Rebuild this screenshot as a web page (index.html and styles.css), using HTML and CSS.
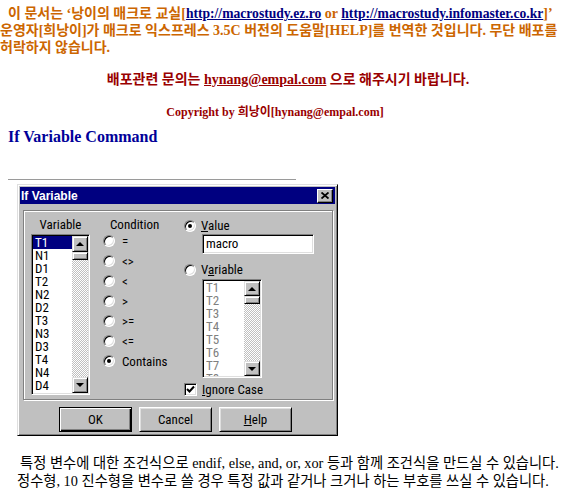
FILE: index.html
```html
<!DOCTYPE html>
<html lang="ko">
<head>
<meta charset="utf-8">
<title>If Variable Command</title>
<link rel="stylesheet" href="styles.css">
</head>
<body>
<div class="intro">
  <div class="line first">이 문서는 ‘낭이의 매크로 교실[<a href="#">http://macrostudy.ez.ro</a> or <a href="#">http://macrostudy.infomaster.co.kr</a>]’</div>
  <div class="line">운영자[희낭이]가 매크로 익스프레스 3.5C 버전의 도움말[HELP]를 번역한 것입니다. 무단 배포를</div>
  <div class="line">허락하지 않습니다.</div>
</div>
<p class="contact">배포관련 문의는 <a href="#">hynang@empal.com</a> 으로 해주시기 바랍니다.</p>
<p class="copyright">Copyright by 희낭이[hynang@empal.com]</p>
<h2 class="heading">If Variable Command</h2>
<hr class="rule">

<div class="dialog">
  <div class="titlebar">
    <span class="title">If Variable</span>
    <span class="close"><svg width="8" height="7" viewBox="0 0 8 7"><path d="M0.5 0.5 L7.5 6.5 M7.5 0.5 L0.5 6.5" stroke="#000" stroke-width="1.8" fill="none"/></svg></span>
  </div>
  <div class="group">
    <div class="col col-var">
      <div class="label center">Variable</div>
      <div class="listbox var-list">
        <ul class="items">
          <li class="sel">T1</li><li>N1</li><li>D1</li><li>T2</li><li>N2</li><li>D2</li><li>T3</li><li>N3</li><li>D3</li><li>T4</li><li>N4</li><li>D4</li>
        </ul>
        <div class="vscroll">
          <div class="sbtn"><i class="tri-up"></i></div>
          <div class="thumb"></div>
          <div class="track"></div>
          <div class="sbtn"><i class="tri-down"></i></div>
        </div>
      </div>
    </div>
    <div class="col col-cond">
      <div class="label cond-label">Condition</div>
      <div class="radio-row"><span class="radio"></span><span>=</span></div>
      <div class="radio-row"><span class="radio"></span><span>&lt;&gt;</span></div>
      <div class="radio-row"><span class="radio"></span><span>&lt;</span></div>
      <div class="radio-row"><span class="radio"></span><span>&gt;</span></div>
      <div class="radio-row"><span class="radio"></span><span>&gt;=</span></div>
      <div class="radio-row"><span class="radio"></span><span>&lt;=</span></div>
      <div class="radio-row"><span class="radio checked"></span><span>Contains</span></div>
    </div>
    <div class="col col-right">
      <div class="opt-row value-row"><span class="radio checked"></span><span><u>V</u>alue</span></div>
      <div class="textbox">macro</div>
      <div class="opt-row var-row"><span class="radio"></span><span>V<u>a</u>riable</span></div>
      <div class="listbox dis-list">
        <ul class="items disabled">
          <li>T1</li><li>T2</li><li>T3</li><li>T4</li><li>T5</li><li>T6</li><li>T7</li><li>T8</li>
        </ul>
        <div class="vscroll">
          <div class="sbtn"><i class="tri-up"></i></div>
          <div class="thumb"></div>
          <div class="track"></div>
          <div class="sbtn"><i class="tri-down"></i></div>
        </div>
      </div>
      <div class="opt-row check-row"><span class="checkbox"><svg width="9" height="9" viewBox="0 0 9 9"><path d="M1 4 L3.5 6.5 L8 1.5" stroke="#000" stroke-width="2" fill="none"/></svg></span><span><u>I</u>gnore Case</span></div>
    </div>
  </div>
  <div class="buttons">
    <div class="btn default">OK</div>
    <div class="btn">Cancel</div>
    <div class="btn"><u>H</u>elp</div>
  </div>
</div>

<div class="outro">
  <div class="oline first">특정 변수에 대한 조건식으로 endif, else, and, or, xor 등과 함께 조건식을 만드실 수 있습니다.</div>
  <div class="oline">정수형, 10 진수형을 변수로 쓸 경우 특정 값과 같거나 크거나 하는 부호를 쓰실 수 있습니다.</div>
</div>
</body>
</html>
```

FILE: styles.css
```css
* { box-sizing: border-box; }
html, body { margin: 0; padding: 0; background: #fff; }
body {
  width: 568px;
  font-family: "Liberation Serif", "Noto Sans CJK KR", serif;
  color: #000;
}

/* ---------- header text ---------- */
.intro {
  padding-top: 5px;
  font-size: 14px;
  font-weight: bold;
  line-height: 17px;
  color: #cc6600;
  white-space: nowrap;
}
.intro .first { padding-left: 8px; }
.intro a { color: #000080; text-decoration: underline; font-size: 13.6px; }

.contact {
  margin: 16px 0 0;
  text-align: center;
  font-size: 14px;
  line-height: 16px;
  font-weight: bold;
  color: #990000;
  padding-left: 8px;
}
.contact a { color: #990000; text-decoration: underline; }

.copyright {
  margin: 16px 0 0;
  text-align: center;
  font-size: 12px;
  line-height: 16px;
  font-weight: bold;
  color: #990000;
  padding-right: 18px;
}

.heading {
  margin: 8px 0 0 8px;
  font-size: 16px;
  line-height: 18px;
  font-weight: bold;
  color: #000099;
}

.rule {
  margin: 33px 0 0 8px;
  width: 288px;
  height: 0;
  border: 0;
  border-top: 1px solid #9a9a9a;
}

/* ---------- dialog ---------- */
.dialog {
  margin: 4px 0 0 17px;
  width: 321px;
  height: 252px;
  background: #c0c0c0;
  border: 1px solid;
  border-color: #dfdfdf #000 #000 #dfdfdf;
  box-shadow: inset 1px 1px 0 #fff, inset -1px -1px 0 #808080;
  padding: 2px;
  font-family: "Roboto", "Liberation Sans", sans-serif;
  font-stretch: 75%;
  font-weight: 400;
  font-size: 13px;
  color: #000;
}
.titlebar {
  height: 17px;
  background: #000080;
  display: flex;
  align-items: center;
  justify-content: space-between;
  padding: 0 2px 0 1px;
}
.title {
  font-family: "Liberation Sans", sans-serif;
  font-stretch: normal;
  font-weight: bold;
  font-size: 12px;
  color: #fff;
}
.close {
  width: 16px;
  height: 14px;
  background: #c0c0c0;
  border: 1px solid;
  border-color: #fff #000 #000 #fff;
  box-shadow: inset -1px -1px 0 #808080;
  display: flex;
  align-items: center;
  justify-content: center;
}

.group {
  margin: 6px 2px 0 3px;
  height: 190px;
  border: 1px solid #808080;
  box-shadow: inset 1px 1px 0 #fff, 1px 1px 0 #fff;
  padding: 7px 0 0 7px;
  display: flex;
  align-items: flex-start;
}
.label { height: 13px; line-height: 13px; }
.center { text-align: center; }

.col-var { width: 59px; }
.col-var .label { margin-bottom: 3px; }

.listbox {
  display: flex;
  background: #fff;
  border: 1px solid;
  border-color: #808080 #fff #fff #808080;
  box-shadow: inset 1px 1px 0 #000, inset -1px -1px 0 #dfdfdf;
  padding: 1px;
  overflow: hidden;
}
.var-list { width: 59px; height: 161px; }
.items {
  list-style: none;
  margin: 0;
  padding: 0;
  flex: 1;
  overflow: hidden;
}
.items li {
  height: 13px;
  line-height: 13px;
  padding-left: 2px;
  white-space: nowrap;
}
.items li.sel { background: #000080; color: #fff; }
.items.disabled li { color: #808080; }

.vscroll {
  width: 16px;
  display: flex;
  flex-direction: column;
}
.sbtn, .thumb {
  background: #c0c0c0;
  border: 1px solid;
  border-color: #dfdfdf #000 #000 #dfdfdf;
  box-shadow: inset 1px 1px 0 #fff, inset -1px -1px 0 #808080;
}
.sbtn {
  height: 16px;
  display: flex;
  align-items: center;
  justify-content: center;
}
.thumb { height: 8px; }
.track {
  flex: 1;
  background: repeating-conic-gradient(#c0c0c0 0 25%, #fff 0 50%) 0 0 / 2px 2px;
}
.tri-up, .tri-down {
  display: block;
  width: 0;
  height: 0;
  border-left: 4px solid transparent;
  border-right: 4px solid transparent;
}
.tri-up { border-bottom: 4px solid #000; }
.tri-down { border-top: 4px solid #000; }

.col-cond { width: 81px; margin-left: 13px; }
.cond-label { padding-left: 7px; }
.radio-row {
  height: 20px;
  display: flex;
  align-items: center;
  gap: 7px;
}
.radio {
  flex: none;
  width: 12px;
  height: 12px;
  border-radius: 50%;
  background: #fff;
  border: 1px solid;
  border-color: #808080 #fff #fff #808080;
  box-shadow: inset 1px 1px 0 #000, inset -1px -1px 0 #dfdfdf;
  display: flex;
  align-items: center;
  justify-content: center;
}
.radio.checked::after {
  content: "";
  width: 4px;
  height: 4px;
  border-radius: 50%;
  background: #000;
}

.col-right { width: 140px; }
.opt-row {
  height: 14px;
  display: flex;
  align-items: center;
  gap: 5px;
  line-height: 14px;
}
.value-row { margin-top: 1px; }
.textbox {
  margin: 1px 0 0 18px;
  width: 112px;
  height: 20px;
  background: #fff;
  border: 1px solid;
  border-color: #808080 #fff #fff #808080;
  box-shadow: inset 1px 1px 0 #000, inset -1px -1px 0 #dfdfdf;
  padding: 1px 3px;
  line-height: 16px;
}
.var-row { margin-top: 9px; }
.dis-list { margin: 2px 0 0 18px; width: 60px; height: 99px; }
.dis-list .sbtn { height: 15px; }
.check-row { margin-top: 5px; height: 13px; }
.checkbox {
  flex: none;
  width: 13px;
  height: 13px;
  background: #fff;
  border: 1px solid;
  border-color: #808080 #fff #fff #808080;
  box-shadow: inset 1px 1px 0 #000, inset -1px -1px 0 #dfdfdf;
  display: flex;
  align-items: center;
  justify-content: center;
}

.buttons {
  margin: 7px 0 0 39px;
  display: flex;
  gap: 7px;
}
.btn {
  width: 73px;
  height: 25px;
  background: #c0c0c0;
  border: 1px solid;
  border-color: #fff #000 #000 #fff;
  box-shadow: inset 1px 1px 0 #dfdfdf, inset -1px -1px 0 #808080;
  display: flex;
  align-items: center;
  justify-content: center;
}
.btn.default {
  border-color: #000;
  box-shadow: inset 1px 1px 0 #fff, inset -1px -1px 0 #000, inset -2px -2px 0 #808080;
}

/* ---------- footer text ---------- */
.outro {
  margin-top: 18px;
  padding-left: 17px;
  font-size: 14.3px;
  line-height: 18px;
  white-space: nowrap;
}
.outro .first { padding-left: 3px; }
```
